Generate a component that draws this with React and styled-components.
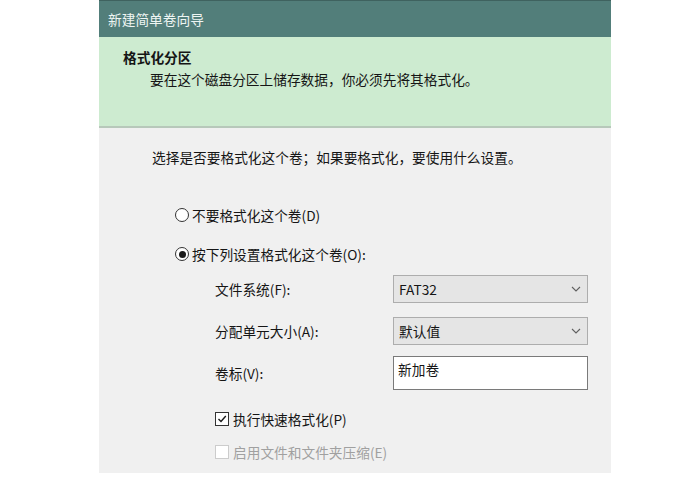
import React from 'react';
import styled, { createGlobalStyle } from 'styled-components';

const GlobalStyle = createGlobalStyle`
  html, body {
    margin: 0;
    padding: 0;
    background: #ffffff;
  }
  body {
    font-family: "Noto Sans CJK SC", "Liberation Sans", sans-serif;
    font-size: 13.7px;
    color: #151515;
  }
`;

const Page = styled.div`
  width: 688px;
  height: 478px;
  overflow: hidden;
  background: #ffffff;
  padding-left: 99px;
  box-sizing: border-box;
`;

const Dialog = styled.div`
  width: 512px;
  height: 473px;
  display: flex;
  flex-direction: column;
  background: #f0f0f0;
`;

const TitleBar = styled.div`
  height: 36px;
  border-top: 1px solid #3f625f;
  background: #527e7a;
  color: #eef5f3;
  display: flex;
  align-items: center;
  padding-left: 9px;
`;

const Header = styled.div`
  height: 91px;
  box-sizing: border-box;
  background: #cdebd0;
  border-bottom: 2px solid #b7c8ba;
  padding: 11px 0 0 24px;
`;

const HeaderTitle = styled.div`
  font-weight: bold;
  line-height: 18px;
`;

const HeaderText = styled.div`
  padding-left: 27px;
  line-height: 18px;
  margin-top: 4px;
`;

const Body = styled.div`
  flex: 1;
  padding: 20px 0 0 53px;
`;

const Instruction = styled.div`
  line-height: 18px;
`;

const RadioRow = styled.label`
  display: flex;
  align-items: center;
  height: 20px;
  margin-top: ${p => p.$gap}px;
  margin-left: 23px;
  gap: 3px;
`;

const Radio = styled.span`
  width: 12px;
  height: 12px;
  border: 1px solid #333;
  border-radius: 50%;
  background: #fff;
  display: flex;
  align-items: center;
  justify-content: center;
  &::after {
    content: '';
    width: 7px;
    height: 7px;
    border-radius: 50%;
    background: ${p => (p.$checked ? '#1a1a1a' : 'transparent')};
  }
`;

const Fields = styled.div`
  margin-left: 63px;
  margin-top: 11px;
  display: grid;
  grid-template-columns: 178px 195px;
  align-items: center;
`;

const FieldLabel = styled.div`
  margin-top: ${p => p.$gap}px;
`;

const Select = styled.div`
  margin-top: ${p => p.$gap}px;
  height: 28px;
  box-sizing: border-box;
  border: 1px solid #adadad;
  background: #e5e5e5;
  display: flex;
  align-items: center;
  justify-content: space-between;
  padding: 0 6px 0 5px;
`;

const TextBox = styled.div`
  margin-top: ${p => p.$gap}px;
  height: 34px;
  box-sizing: border-box;
  border: 1px solid #7a7a7a;
  background: #ffffff;
  padding: 3px 0 0 4px;
  line-height: 18px;
`;

const CheckRow = styled.label`
  display: flex;
  align-items: center;
  height: 20px;
  margin-left: 63px;
  margin-top: ${p => p.$gap}px;
  gap: 4px;
  color: ${p => (p.$disabled ? '#a0a0a0' : '#151515')};
`;

const Box = styled.span`
  width: 12px;
  height: 12px;
  border: 1px solid ${p => (p.$disabled ? '#cccccc' : '#333333')};
  background: #ffffff;
  display: flex;
  align-items: center;
  justify-content: center;
`;

const Chevron = () => (
  <svg width="10" height="6" viewBox="0 0 10 6">
    <path d="M1 1 L5 5 L9 1" fill="none" stroke="#606060" strokeWidth="1.1" />
  </svg>
);

const Check = () => (
  <svg width="10" height="10" viewBox="0 0 10 10">
    <path d="M1.5 5 L4 7.5 L8.8 2" fill="none" stroke="#1a1a1a" strokeWidth="1.4" />
  </svg>
);

export default function App() {
  return (
    <Page>
      <GlobalStyle />
      <Dialog>
        <TitleBar>新建简单卷向导</TitleBar>
        <Header>
          <HeaderTitle>格式化分区</HeaderTitle>
          <HeaderText>要在这个磁盘分区上储存数据，你必须先将其格式化。</HeaderText>
        </Header>
        <Body>
          <Instruction>选择是否要格式化这个卷；如果要格式化，要使用什么设置。</Instruction>

          <RadioRow $gap={39}>
            <Radio />
            不要格式化这个卷(D)
          </RadioRow>
          <RadioRow $gap={19}>
            <Radio $checked />
            按下列设置格式化这个卷(O):
          </RadioRow>

          <Fields>
            <FieldLabel $gap={0}>文件系统(F):</FieldLabel>
            <Select $gap={0}>
              <span>FAT32</span>
              <Chevron />
            </Select>
            <FieldLabel $gap={14}>分配单元大小(A):</FieldLabel>
            <Select $gap={14}>
              <span>默认值</span>
              <Chevron />
            </Select>
            <FieldLabel $gap={11}>卷标(V):</FieldLabel>
            <TextBox $gap={11}>新加卷</TextBox>
          </Fields>

          <CheckRow $gap={19}>
            <Box>
              <Check />
            </Box>
            执行快速格式化(P)
          </CheckRow>
          <CheckRow $gap={13} $disabled>
            <Box $disabled />
            启用文件和文件夹压缩(E)
          </CheckRow>
        </Body>
      </Dialog>
    </Page>
  );
}
